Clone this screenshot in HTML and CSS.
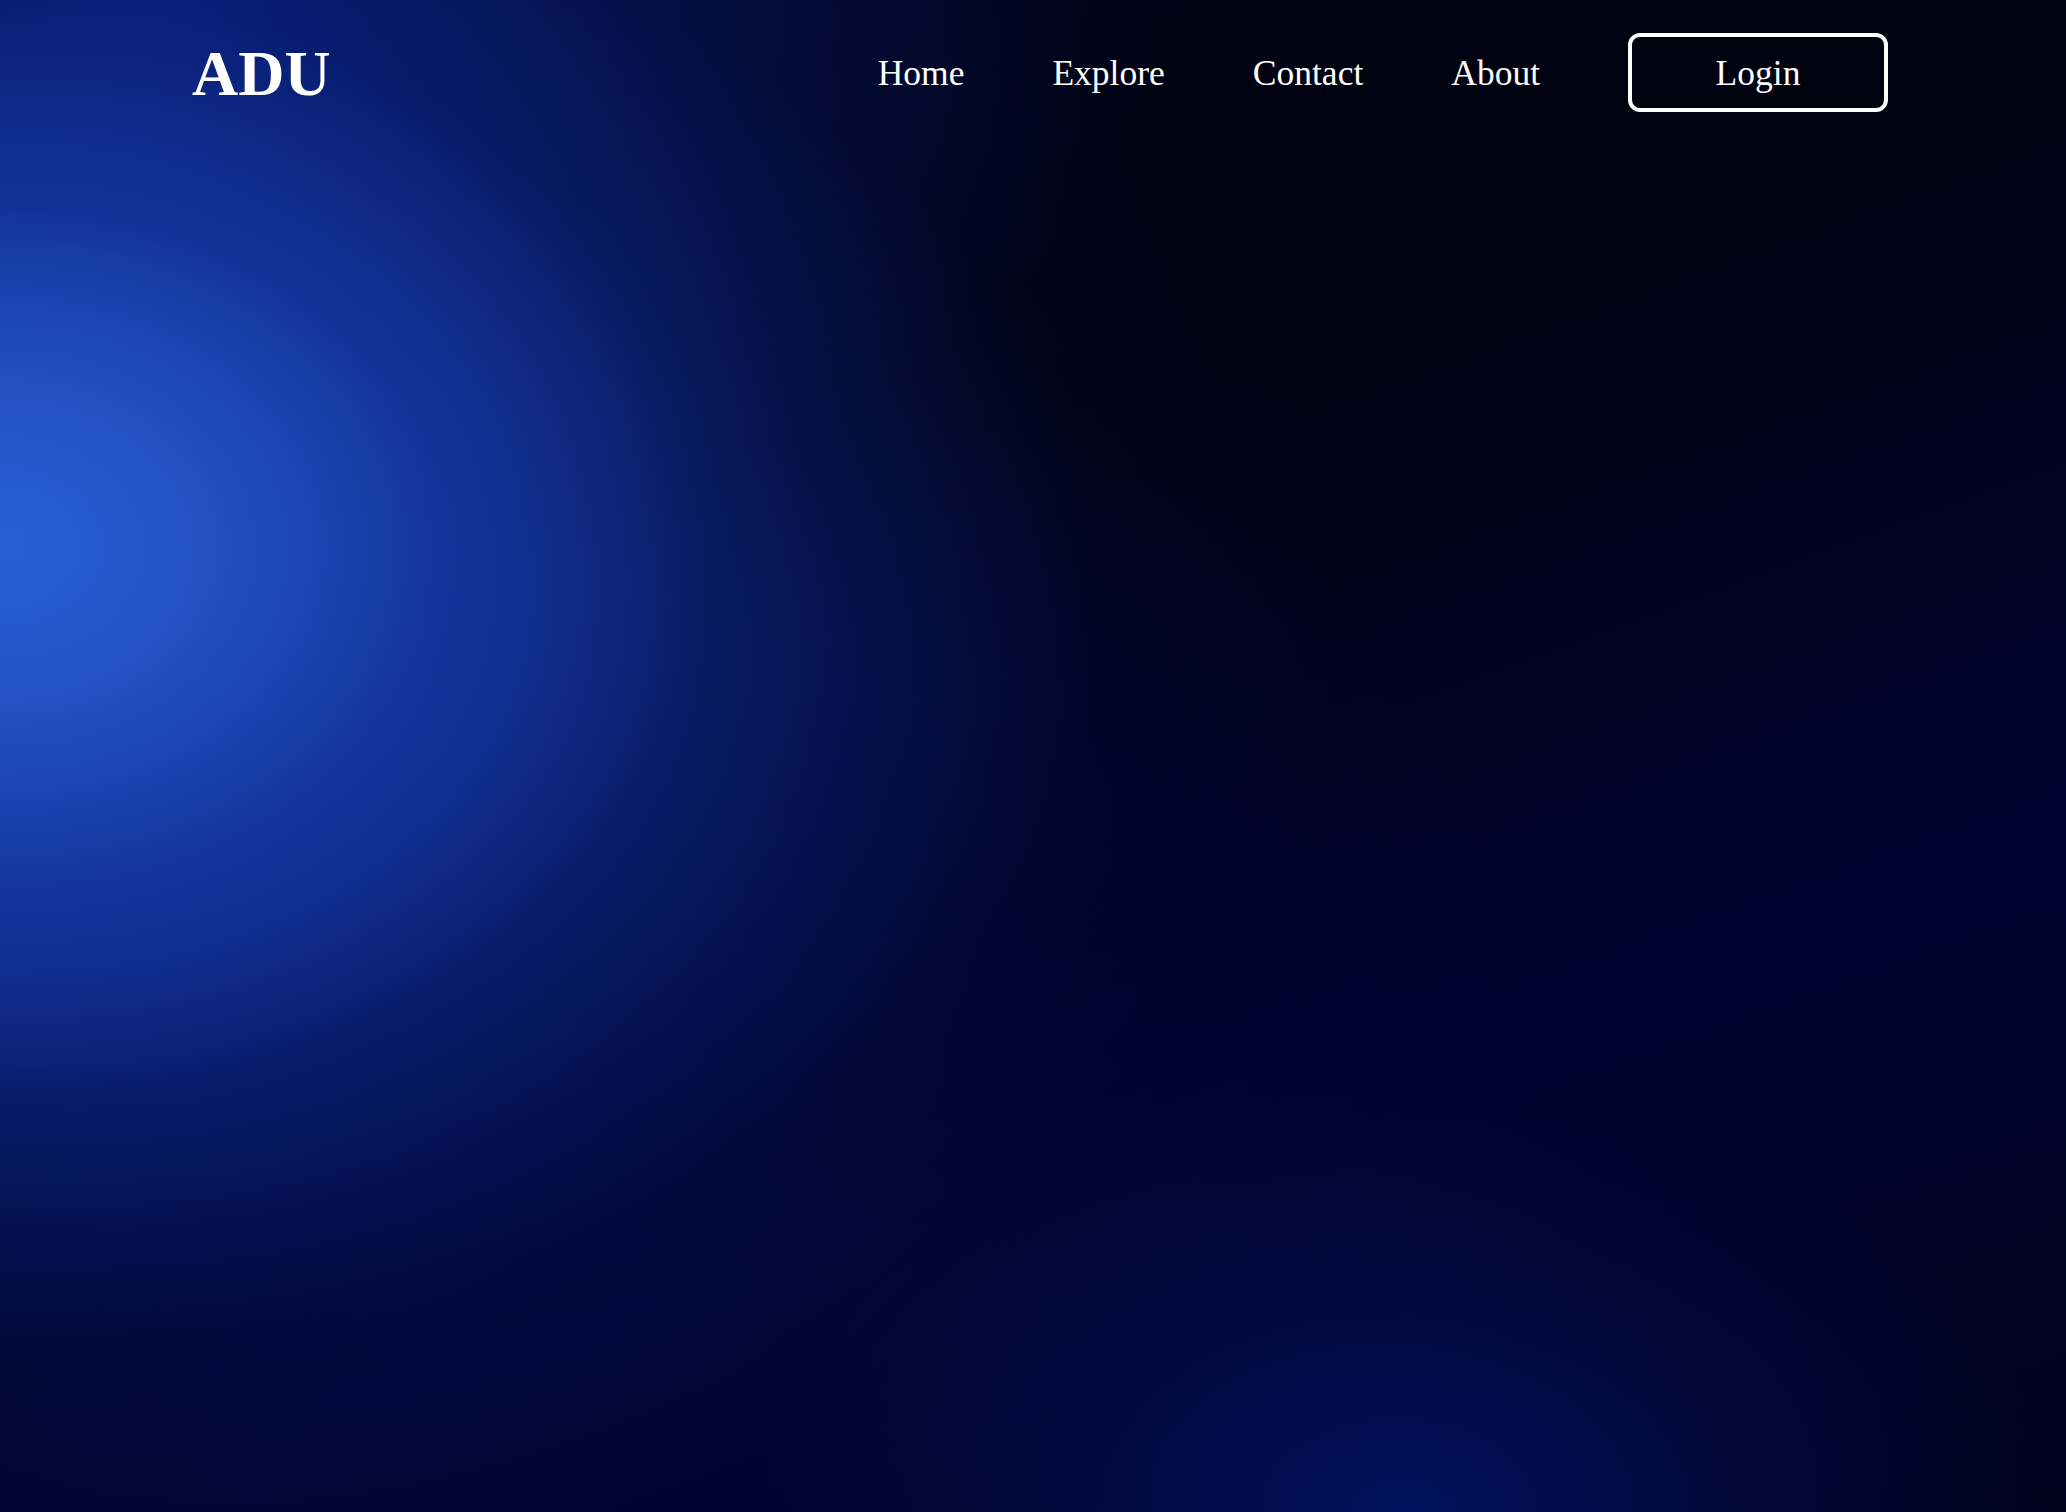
FILE: index.html
```html
<!DOCTYPE html>
<html lang="en">
<head>
<meta charset="utf-8">
<title>ADU</title>
<link rel="stylesheet" href="styles.css">
</head>
<body>
<div class="page">
  <header class="topbar">
    <div class="logo">ADU</div>
    <nav class="nav">
      <a class="nav-link" href="#">Home</a>
      <a class="nav-link" href="#">Explore</a>
      <a class="nav-link" href="#">Contact</a>
      <a class="nav-link" href="#">About</a>
      <a class="login-btn" href="#">Login</a>
    </nav>
  </header>
</div>
</body>
</html>
```
FILE: styles.css
```css
* { box-sizing: border-box; }
html, body { margin: 0; padding: 0; }
body {
  width: 2066px;
  height: 1512px;
  overflow: hidden;
  font-family: "Liberation Serif", "Times New Roman", serif;
  color: #fff;
  background-color: #01031f;
  background-image:
    radial-gradient(ellipse 720px 560px at 0% 36%, rgba(42,96,212,1) 0%, rgba(36,86,200,0.85) 30%, rgba(26,64,176,0.5) 60%, rgba(14,40,140,0) 100%),
    radial-gradient(ellipse 1350px 900px at 0% 40%, rgba(22,58,172,0.95) 0%, rgba(18,50,160,0.8) 35%, rgba(10,34,125,0.5) 62%, rgba(4,14,70,0.2) 82%, rgba(2,6,40,0) 100%),
    radial-gradient(ellipse 1000px 560px at 8% 0%, rgba(10,36,144,0.85) 0%, rgba(8,28,110,0.45) 55%, rgba(2,6,40,0) 100%),
    radial-gradient(ellipse 650px 420px at 68% 100%, rgba(2,20,100,0.9) 0%, rgba(2,14,80,0.5) 50%, rgba(1,6,50,0) 100%),
    radial-gradient(ellipse 1400px 800px at 10% 72%, rgba(3,18,90,0.6) 0%, rgba(1,8,60,0.3) 60%, rgba(0,3,30,0) 100%),
    linear-gradient(160deg, #000318 0%, #00020f 35%, #000430 70%, #00031c 100%);
}
.page {
  width: 100%;
  height: 100%;
}
.topbar {
  display: flex;
  align-items: center;
  justify-content: space-between;
  padding: 32px 178px 0 192px;
}
.logo {
  font-size: 64px;
  font-weight: bold;
  line-height: 79px;
  padding-top: 2px;
}
.nav {
  display: flex;
  align-items: center;
  gap: 88px;
}
.nav-link {
  color: #fff;
  text-decoration: none;
  font-size: 35.5px;
}
.login-btn {
  display: flex;
  align-items: center;
  justify-content: center;
  width: 260px;
  height: 79px;
  border: 4px solid #fff;
  border-radius: 12px;
  color: #fff;
  text-decoration: none;
  font-size: 35.5px;
}
```
